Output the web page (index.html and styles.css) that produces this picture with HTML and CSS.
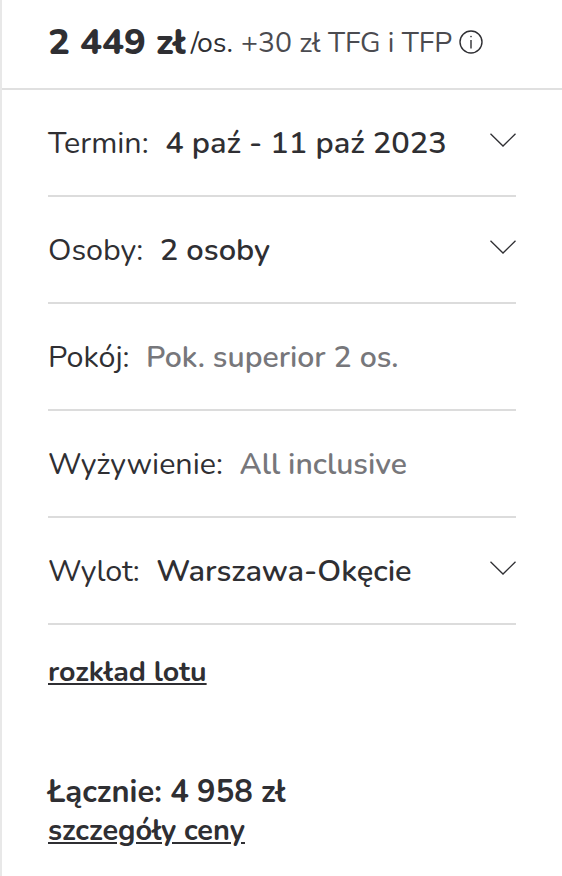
FILE: index.html
```html
<!DOCTYPE html>
<html lang="pl">
<head>
<meta charset="utf-8">
<title>Rezerwacja</title>
<link rel="stylesheet" href="styles.css">
</head>
<body>
<div class="panel">
  <header class="price-bar">
    <strong class="price">2 449 zł</strong><span class="per">/os.</span><span class="extra">+30 zł TFG i TFP</span>
    <svg class="info" width="24" height="24" viewBox="0 0 24 24" fill="none" stroke="#2f2f33" stroke-width="1.4"><circle cx="12" cy="12" r="11"/><path d="M12 10v8.500"/><circle cx="12" cy="6.600" r=".8" fill="#2f2f33" stroke="none"/></svg>
  </header>
  <div class="rows">
    <div class="row"><span class="label">Termin:</span><span class="value">4 paź - 11 paź 2023</span><svg class="chev" width="26" height="14" viewBox="0 0 26 14" fill="none" stroke="#2f2f33" stroke-width="1.3"><path d="M.5.7L13 13 25.500.7"/></svg></div>
    <div class="row"><span class="label">Osoby:</span><span class="value">2 osoby</span><svg class="chev" width="26" height="14" viewBox="0 0 26 14" fill="none" stroke="#2f2f33" stroke-width="1.3"><path d="M.5.7L13 13 25.500.7"/></svg></div>
    <div class="row"><span class="label">Pokój:</span><span class="value muted">Pok. superior 2 os.</span></div>
    <div class="row"><span class="label">Wyżywienie:</span><span class="value muted">All inclusive</span></div>
    <div class="row"><span class="label">Wylot:</span><span class="value">Warszawa-Okęcie</span><svg class="chev" width="26" height="14" viewBox="0 0 26 14" fill="none" stroke="#2f2f33" stroke-width="1.3"><path d="M.5.7L13 13 25.500.7"/></svg></div>
  </div>
  <a class="link schedule" href="#">rozkład lotu</a>
  <div class="total">Łącznie: 4 958 zł</div>
  <a class="link details" href="#">szczegóły ceny</a>
</div>
</body>
</html>
```
FILE: styles.css
```css
html, body { margin: 0; padding: 0; background: #fff; }
body { width: 562px; height: 876px; overflow: hidden; font-family: "Nunito", "Lato", "Open Sans", sans-serif; color: #2f2f33; }
.panel { height: 876px; border-left: 2px solid #e8e8e8; box-sizing: border-box; }
.price-bar { height: 90px; box-sizing: border-box; border-bottom: 2px solid #e0e0e0; display: flex; align-items: center; padding-left: 46px; padding-bottom: 4px; }
.price { font-size: 36.500px; font-weight: 800; margin-right: 5px; }
.per { font-size: 28.500px; margin-right: 8px; }
.extra { font-size: 28.300px; margin-right: 7px; color: #4b4b50; }
.info { flex: none; }
.rows { margin: 0 46px; }
.row { height: 107px; box-sizing: border-box; border-bottom: 2px solid #dcdcdc; display: flex; align-items: center; font-size: 30.500px; }
.label { margin-right: 16.500px; }
.value { font-weight: 650; font-size: 30.800px; }
.value.muted { color: #77777b; font-size: 30.200px; }
.chev { margin-left: auto; margin-bottom: 6px; }
.link { display: block; margin-left: 46px; color: #2f2f33; font-size: 28.600px; font-weight: 700; text-decoration: underline; }
.schedule { margin-top: 27px; }
.total { margin: 80px 0 0 46px; font-size: 30.900px; font-weight: 700; }
.details { margin-top: -2px; font-size: 28.900px; }
```
